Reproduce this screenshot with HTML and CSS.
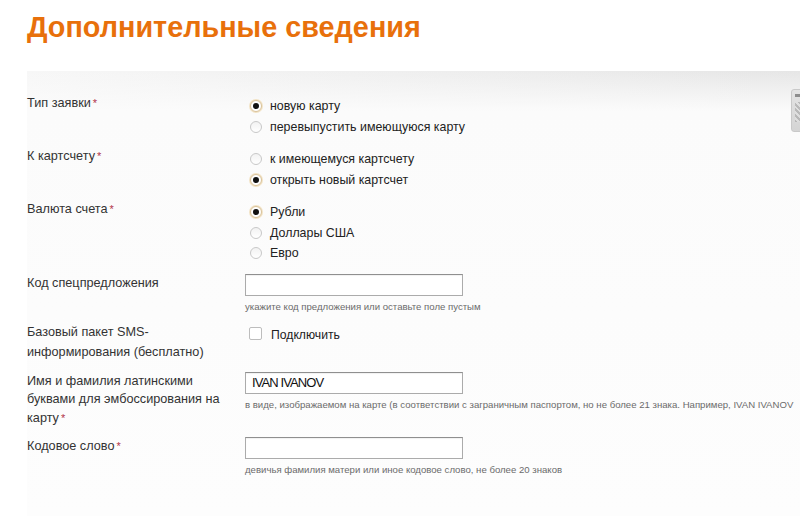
FILE: index.html
```html
<!DOCTYPE html>
<html lang="ru">
<head>
<meta charset="utf-8">
<title>Дополнительные сведения</title>
<link rel="stylesheet" href="styles.css">
</head>
<body>
<h1 class="title">Дополнительные сведения</h1>
<div class="panel">
  <div class="card-thumb"><span class="card-stripe"></span><span class="card-chip"></span></div>
  <div class="row">
    <div class="label">Тип заявки<span class="req">*</span></div>
    <div class="control">
      <label class="opt"><span class="radio checked"></span>новую карту</label>
      <label class="opt"><span class="radio"></span>перевыпустить имеющуюся карту</label>
    </div>
  </div>
  <div class="row">
    <div class="label">К картсчету<span class="req">*</span></div>
    <div class="control">
      <label class="opt"><span class="radio"></span>к имеющемуся картсчету</label>
      <label class="opt"><span class="radio checked"></span>открыть новый картсчет</label>
    </div>
  </div>
  <div class="row">
    <div class="label">Валюта счета<span class="req">*</span></div>
    <div class="control">
      <label class="opt"><span class="radio checked"></span>Рубли</label>
      <label class="opt"><span class="radio"></span>Доллары США</label>
      <label class="opt"><span class="radio"></span>Евро</label>
    </div>
  </div>
  <div class="row">
    <div class="label">Код спецпредложения</div>
    <div class="control field">
      <div class="input"></div>
      <div class="hint">укажите код предложения или оставьте поле пустым</div>
    </div>
  </div>
  <div class="row">
    <div class="label label-sms">Базовый пакет SMS-<br>информирования (бесплатно)</div>
    <div class="control">
      <label class="opt check-opt"><span class="checkbox"></span>Подключить</label>
    </div>
  </div>
  <div class="row">
    <div class="label">Имя и фамилия латинскими буквами для эмбоссирования на карту<span class="req">*</span></div>
    <div class="control field">
      <div class="input"><span class="value">IVAN IVANOV</span></div>
      <div class="hint">в виде, изображаемом на карте (в соответствии с заграничным паспортом, но не более 21 знака. Например, IVAN IVANOV</div>
    </div>
  </div>
  <div class="row">
    <div class="label">Кодовое слово<span class="req">*</span></div>
    <div class="control field">
      <div class="input"></div>
      <div class="hint">девичья фамилия матери или иное кодовое слово, не более 20 знаков</div>
    </div>
  </div>
</div>
</body>
</html>
```
FILE: styles.css
```css
html, body {
  margin: 0;
  padding: 0;
  background: #ffffff;
  overflow: hidden;
}
body {
  font-family: "Liberation Sans", Arial, sans-serif;
  width: 800px;
  height: 516px;
}
.title {
  margin: 0;
  padding: 9px 0 0 27px;
  height: 71px;
  box-sizing: border-box;
  font-size: 28.8px;
  line-height: 36px;
  font-weight: bold;
  color: #e8700b;
}
.panel {
  position: relative;
  margin-left: 27px;
  padding-top: 23px;
  height: 445px;
  box-sizing: border-box;
  background:
    linear-gradient(to bottom, rgba(255,255,255,0) 0, #fbfbfb 40px, #fdfdfd 100%),
    linear-gradient(to right, #f7f7f7 0, #ededed 60%, #e6e6e6 100%);
}
.card-thumb {
  position: absolute;
  left: 764px;
  top: 18px;
  width: 14px;
  height: 41px;
  border: 1px solid #c9c9c9;
  border-radius: 3px;
  background: linear-gradient(to bottom, #e4e4e4, #d4d4d4);
}
.card-stripe {
  position: absolute;
  left: 3px;
  top: 4px;
  width: 5px;
  height: 3px;
  background: #8d8d8d;
}
.card-chip {
  position: absolute;
  left: 3px;
  top: 12px;
  width: 6px;
  height: 20px;
  background: repeating-linear-gradient(45deg, #aaa 0 2px, #e0e0e0 2px 4px);
  opacity: 0.7;
}
.row {
  display: flex;
  align-items: flex-start;
  margin-bottom: 10px;
}
.label {
  width: 200px;
  flex: none;
  margin-right: 18px;
  font-size: 12.7px;
  line-height: 18.5px;
  color: #333;
}
.label-sms {
  line-height: 20px;
}
.req {
  color: #b2344a;
  font-size: 11px;
  margin-left: 2px;
}
.control {
  flex: 1;
  padding-top: 2px;
  min-width: 0;
}
.opt {
  display: flex;
  align-items: center;
  height: 20.5px;
  font-size: 12.4px;
  color: #222;
}
.radio {
  width: 10px;
  height: 10px;
  flex: none;
  margin: 0 8px 0 5px;
  border: 1px solid #c8c8c8;
  border-radius: 50%;
  background: linear-gradient(to bottom, #f2f2f2, #ffffff);
  position: relative;
}
.radio.checked {
  border-color: #d9c29a;
  background: #fff;
  box-shadow: 0 0 0 1px #f2e3c6;
}
.radio.checked::after {
  content: "";
  position: absolute;
  left: 2px;
  top: 2px;
  width: 6px;
  height: 6px;
  border-radius: 50%;
  background: #111;
}
.check-opt {
  height: 22px;
  font-size: 12.2px;
}
.checkbox {
  width: 11px;
  height: 11px;
  flex: none;
  margin: 0 9px 0 4px;
  border: 1px solid #bdbdbd;
  border-radius: 2px;
  background: #fff;
  align-self: flex-start;
  margin-top: 3px;
}
.control.field {
  padding-top: 0;
}
.input {
  height: 20px;
  width: 210px;
  border: 1px solid #ababab;
  border-top-color: #8f8f8f;
  background: #fff;
  box-shadow: inset 0 1px 1px rgba(0,0,0,0.06);
  display: flex;
  align-items: center;
  padding-left: 6px;
}
.value {
  font-size: 13px;
  color: #111;
  letter-spacing: -0.9px;
}
.hint {
  margin-top: 5px;
  font-size: 9.6px;
  line-height: 11px;
  color: #6b6b6b;
  white-space: nowrap;
}
```
